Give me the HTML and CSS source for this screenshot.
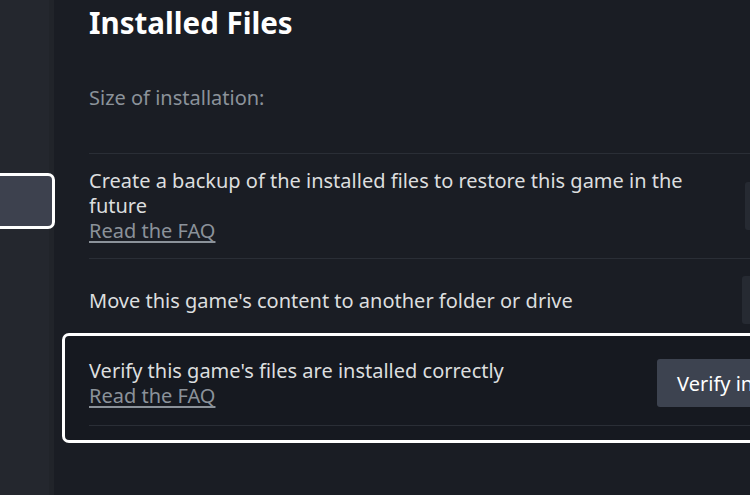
FILE: index.html
```html
<!DOCTYPE html>
<html lang="en">
<head>
<meta charset="utf-8">
<title>Installed Files</title>
<link rel="stylesheet" href="styles.css">
</head>
<body>
<div class="app">
  <nav class="sidebar">
    <div class="nav-item selected"></div>
  </nav>
  <main class="main">
    <h1 class="title">Installed Files</h1>
    <div class="content">
      <div class="row size-row">
        <span class="muted">Size of installation:</span>
      </div>
      <div class="row backup-row">
        <div class="row-text">
          <div>Create a backup of the installed files to restore this game in the future</div>
          <a class="faq" href="#">Read the FAQ</a>
        </div>
        <button class="btn">Backup game files</button>
      </div>
      <div class="row move-row">
        <div class="row-text">
          <div>Move this game's content to another folder or drive</div>
        </div>
        <button class="btn">Move install folder</button>
      </div>
      <div class="focus-box">
        <div class="row verify-row">
          <div class="row-text">
            <div>Verify this game's files are installed correctly</div>
            <a class="faq" href="#">Read the FAQ</a>
          </div>
          <button class="btn btn-focus">Verify integrity of game files</button>
        </div>
      </div>
    </div>
  </main>
</div>
</body>
</html>
```
FILE: styles.css
```css
html, body {
  margin: 0;
  padding: 0;
  height: 100%;
  overflow: hidden;
  background: #1a1d24;
}
body {
  font-family: "Noto Sans", "Open Sans", sans-serif;
  color: #dcdedf;
  font-size: 20px;
}
.app {
  display: flex;
  height: 495px;
}
.sidebar {
  width: 49px;
  flex: none;
  background: #24272e;
  border-right: 5px solid #21242a;
  padding-top: 173px;
}
.nav-item.selected {
  height: 50px;
  width: 59px;
  margin-left: -10px;
  border: 3px solid #ffffff;
  border-radius: 7px;
  background: #3d414e;
  position: relative;
  z-index: 1;
}
.main {
  flex: 1;
  padding-left: 35px;
  min-width: 0;
}
.title {
  margin: 4px 0 0;
  font-size: 29.5px;
  line-height: 38px;
  font-weight: 700;
  color: #ffffff;
}
.content {
  width: 867px;
}
.row {
  display: flex;
  align-items: center;
  justify-content: space-between;
  border-bottom: 1px solid #2a2e36;
}
.row-text {
  max-width: 610px;
  line-height: 25px;
}
.muted {
  color: #8b929a;
}
.size-row {
  height: 111px;
}
.backup-row {
  padding: 14px 0 15px;
}
.move-row {
  padding: 17px 0 9px;
  border-bottom: none;
}
.faq {
  color: #8b929a;
  text-decoration: underline;
  text-underline-offset: 3px;
}
.btn {
  flex: none;
  font-family: inherit;
  font-size: 20px;
  color: #dcdedf;
  height: 48px;
  padding: 0 20px;
  border: none;
  border-radius: 3px;
  background: #262a32;
}
.btn-focus {
  padding-right: 12px;
  background: #3d4350;
  color: #ffffff;
}
.focus-box {
  margin-left: -27px;
  padding: 0 0 14px 24px;
  border: 3px solid #ffffff;
  border-radius: 7px;
  background: #161920;
}
.verify-row {
  padding: 22px 0 17px;
  border-bottom: 1px solid #2a2e36;
}
```
